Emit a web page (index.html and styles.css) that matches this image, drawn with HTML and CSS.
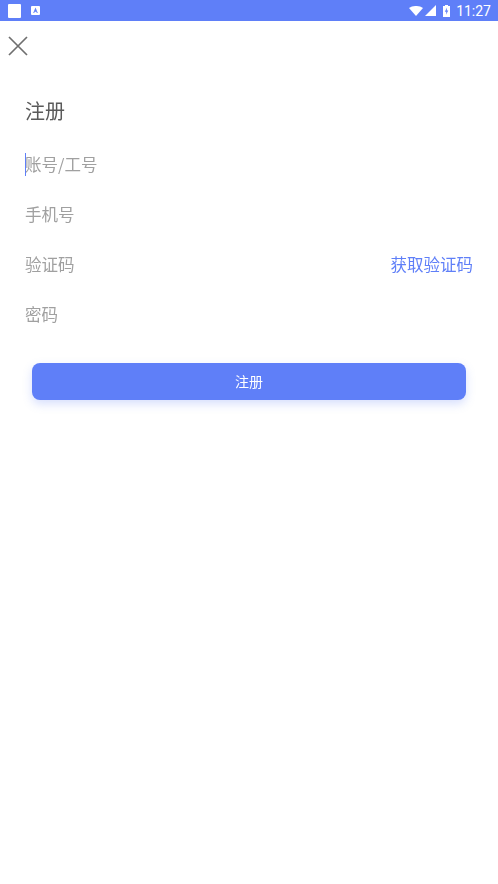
FILE: index.html
```html
<!DOCTYPE html>
<html lang="zh">
<head>
<meta charset="utf-8">
<title>注册</title>
<link rel="stylesheet" href="styles.css">
</head>
<body>
<div class="statusbar">
  <div class="status-left">
    <span class="note-icon"></span>
    <svg class="app-icon" width="9" height="9" viewBox="0 0 9 9"><rect width="9" height="9" rx="1" fill="#fff"/><path d="M4.500 1.500 6.800 7H5.800L5.300 5.800H3.700L3.200 7H2.200Z" fill="#5f7ff8"/></svg>
  </div>
  <div class="status-right">
    <svg class="wifi" width="14" height="10" viewBox="0 0 14 10"><path d="M0 2C4-.7 10-.7 14 2L7 10Z" fill="#fff"/></svg>
    <svg class="cell" width="11" height="11" viewBox="0 0 11 11"><path d="M11 0V11H0Z" fill="#fff"/></svg>
    <svg class="batt" width="7" height="12" viewBox="0 0 7 12"><path d="M2 0H5V1H7V12H0V1H2Z" fill="#fff"/><path d="M4 2.500 1.800 6.800H3.300L3 9.800 5.300 5.500H3.800Z" fill="#5f7ff8"/></svg>
    <span class="clock">11:27</span>
  </div>
</div>
<button class="close" aria-label="关闭">
  <svg width="20" height="20" viewBox="0 0 20 20"><path d="M1 1 19 19M19 1 1 19" stroke="#6f6f6f" stroke-width="1.700" fill="none"/></svg>
</button>
<main class="content">
  <h1 class="title">注册</h1>
  <div class="field"><span class="caret"></span><span class="ph">账号/工号</span></div>
  <div class="field"><span class="ph">手机号</span></div>
  <div class="field"><span class="ph">验证码</span><a class="code-link">获取验证码</a></div>
  <div class="field"><span class="ph">密码</span></div>
  <button class="submit">注册</button>
</main>
</body>
</html>
```

FILE: styles.css
```css
* { box-sizing: border-box; }
html, body { margin: 0; padding: 0; height: 100%; background: #fff; overflow: hidden; }
body { font-family: "Noto Sans CJK SC", "Noto Sans", sans-serif; }
.statusbar { height: 21px; background: #5f7ff8; display: flex; justify-content: space-between; align-items: center; padding: 0 7px 0 8px; }
.status-left { display: flex; align-items: center; gap: 10px; }
.note-icon { width: 13px; height: 14px; background: #fff; border-radius: 1px; }
.app-icon { display: block; }
.status-right { display: flex; align-items: center; }
.status-right svg { display: block; }
.cell { margin-left: 2px; }
.batt { margin-left: 7px; }
.clock { font-family: Roboto, sans-serif; font-size: 14px; color: #fff; margin-left: 6px; }
.close { display: block; background: none; border: 0; padding: 0; margin: 15px 0 0 8px; width: 20px; height: 20px; }
.close svg { display: block; }
.content { padding: 0 25px; margin-top: 35px; will-change: transform; }
.title { font-size: 20px; font-weight: 400; color: #5a5a5a; margin: 0 0 8px; line-height: 40px; height: 40px; }
.field { position: relative; display: flex; justify-content: space-between; align-items: center; height: 50px; font-size: 16.500px; }
.ph { color: #a0a0a0; }
.caret { position: absolute; left: 0; top: 14px; width: 1px; height: 23px; background: #5f7ff8; }
.code-link { color: #5f7ff8; }
.submit { display: block; width: 434px; height: 37px; margin: 24px 0 0 7px; padding: 0 0 2px; border: 0; border-radius: 8px; background: #5f7ff8; color: #fff; font: inherit; font-size: 14px; box-shadow: 0 4px 10px rgba(95,127,248,.25); }
```
